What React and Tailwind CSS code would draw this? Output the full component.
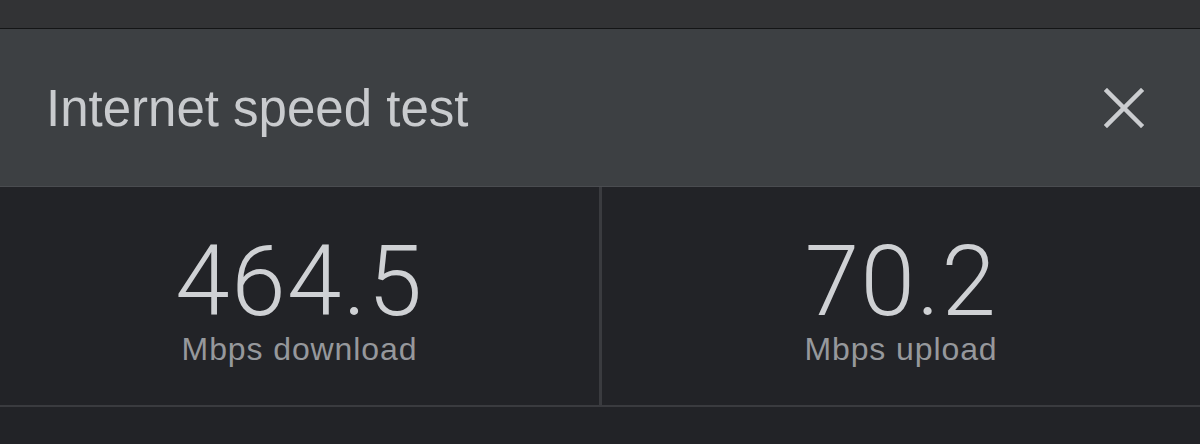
export default function App() {
  return (
    <div
      className="h-[444px] w-[1200px] overflow-hidden bg-[#222327]"
      style={{ fontFamily: '"Liberation Sans", Arial, sans-serif' }}
    >
      {/* top bar */}
      <div className="h-[29px] border-b border-[#141516] bg-[#323335]" />

      {/* header */}
      <div className="flex h-[158px] items-center justify-between border-b border-[#4a4c50] bg-[#3d4043] pl-[46px] pr-[56px]">
        <h1 className="pt-[2px] text-[51px] font-normal leading-none text-[#c9cbce]">
          Internet speed test
        </h1>
        <button className="flex h-[40px] w-[40px] items-center justify-center" aria-label="Close">
          <svg width="40" height="40" viewBox="0 0 40 40">
            <path d="M3 3 L37 37 M37 3 L3 37" stroke="#cbcdd0" strokeWidth="4.5" strokeLinecap="square" />
          </svg>
        </button>
      </div>

      {/* results */}
      <div className="grid h-[220px] grid-cols-[599px_3px_1fr] border-b-2 border-[#3a3b3f]">
        <Stat value="464.5" label="Mbps download" />
        <div className="bg-[#3a3b3f]" />
        <Stat value="70.2" label="Mbps upload" />
      </div>
    </div>
  );
}

function Stat({ value, label }) {
  return (
    <div className="flex flex-col items-center pt-[46px]">
      <div
        className="text-[98px] font-light leading-none tracking-[1.5px] text-[#cfd1d4]"
        style={{ fontFamily: 'Roboto, "Liberation Sans", sans-serif' }}
      >
        {value}
      </div>
      <div className="mt-[2px] text-[32px] leading-none tracking-[0.9px] text-[#96989c]">{label}</div>
    </div>
  );
}
